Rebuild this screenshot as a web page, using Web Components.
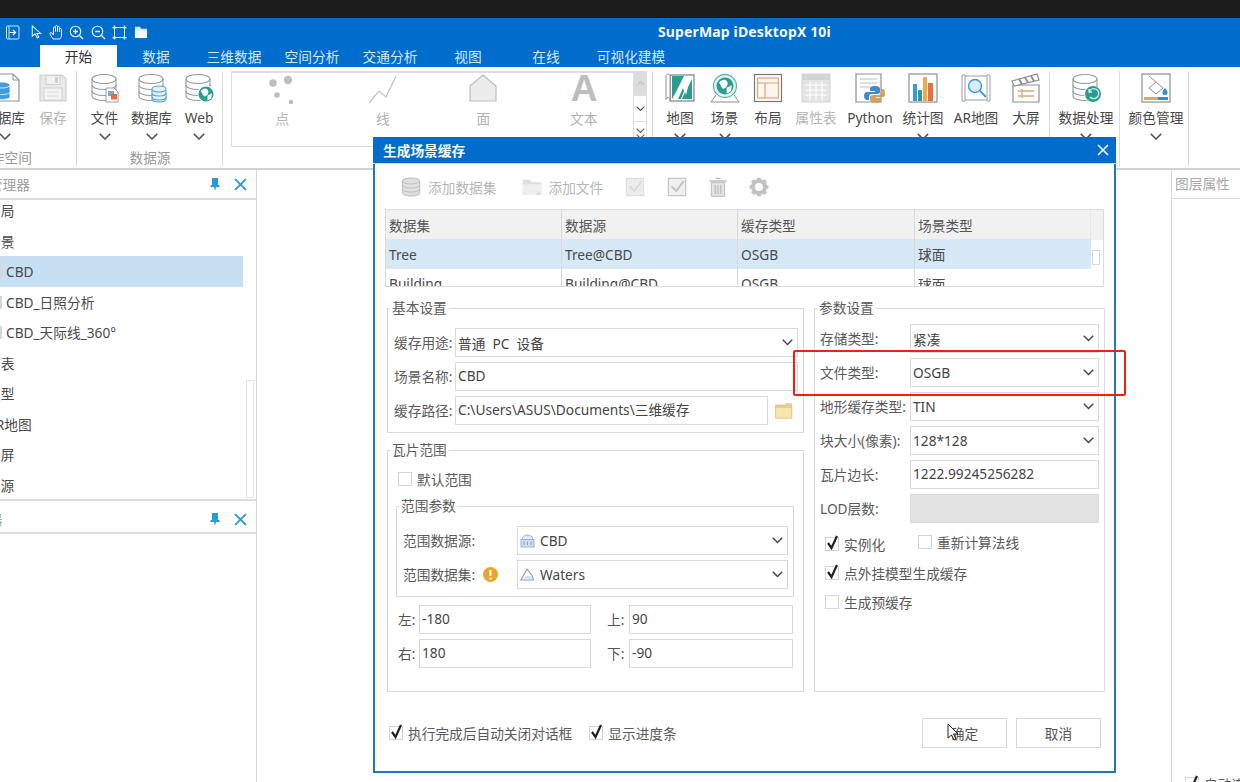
<!DOCTYPE html>
<html lang="zh">
<head>
<meta charset="utf-8">
<title>SuperMap iDesktopX 10i</title>
<style>
html, body { margin: 0; height: 782px; overflow: hidden; background: #fff; }
body { font: 13.7px "Noto Sans", "Noto Sans CJK SC", sans-serif; color: #4a4a4a; }
.coords { display: grid; grid-template-columns: 21px 172px 16px 22px 164px; row-gap: 5px; align-items: center; margin: 3px 0 0 2px; height: 63px; grid-auto-rows: 29px; }
.coords span { color: #555; margin-top: -2px; }
.checks { display: grid; grid-template-columns: 93px 1fr; margin: 8px 0 0 5px; grid-auto-rows: 29px; }
.foot { display: flex; align-items: center; height: 30px; margin-top: 26px; width: 716px; }
</style>
</head>
<body>

<sm-app>
  <sm-quickbar slot="quick"></sm-quickbar>

  <sm-tab slot="tabs" active>开始</sm-tab>
  <sm-tab slot="tabs">数据</sm-tab>
  <sm-tab slot="tabs">三维数据</sm-tab>
  <sm-tab slot="tabs">空间分析</sm-tab>
  <sm-tab slot="tabs">交通分析</sm-tab>
  <sm-tab slot="tabs">视图</sm-tab>
  <sm-tab slot="tabs">在线</sm-tab>
  <sm-tab slot="tabs" style="width:92px">可视化建模</sm-tab>

  <sm-ribbon-group slot="ribbon" caption="工作空间" style="width:145px;margin-left:-68px;--just:flex-end">
    <sm-tool icon="wsdb" label="数据库" style="width:49px"></sm-tool>
    <sm-tool icon="save" label="保存" off nochev style="width:48px"></sm-tool>
  </sm-ribbon-group>
  <sm-ribbon-group slot="ribbon" caption="数据源" style="width:146px;--pad:4px">
    <sm-tool icon="dbfile" label="文件" style="width:47px"></sm-tool>
    <sm-tool icon="dbdb" label="数据库" style="width:47px"></sm-tool>
    <sm-tool icon="dbweb" label="Web" style="width:48px"></sm-tool>
  </sm-ribbon-group>
  <sm-ribbon-group slot="ribbon" style="width:430px;--pad:8px">
    <sm-gallery>
      <sm-tool icon="dots" label="点" off nochev style="width:100.5px"></sm-tool>
      <sm-tool icon="line" label="线" off nochev style="width:100.5px"></sm-tool>
      <sm-tool icon="poly" label="面" off nochev style="width:100.5px"></sm-tool>
      <sm-tool icon="letter" label="文本" off nochev style="width:100.5px"></sm-tool>
    </sm-gallery>
  </sm-ribbon-group>
  <sm-ribbon-group slot="ribbon" style="width:397px;--pad:5px">
    <sm-tool icon="map" label="地图" style="width:44px"></sm-tool>
    <sm-tool icon="scene" label="场景" style="width:45px"></sm-tool>
    <sm-tool icon="layout" label="布局" nochev style="width:42px"></sm-tool>
    <sm-tool icon="attr" label="属性表" off nochev style="width:54px"></sm-tool>
    <sm-tool icon="python" label="Python" nochev style="width:54px"></sm-tool>
    <sm-tool icon="chart" label="统计图" style="width:52px"></sm-tool>
    <sm-tool icon="ar" label="AR地图" nochev style="width:54px"></sm-tool>
    <sm-tool icon="clap" label="大屏" nochev style="width:46px"></sm-tool>
  </sm-ribbon-group>
  <sm-ribbon-group slot="ribbon" style="width:70px">
    <sm-tool icon="proc" label="数据处理" style="width:72px"></sm-tool>
  </sm-ribbon-group>
  <sm-ribbon-group slot="ribbon" style="width:69px">
    <sm-tool icon="color" label="颜色管理" style="width:72px"></sm-tool>
  </sm-ribbon-group>

  <sm-panel slot="left" caption="工作空间管理器" shift="-66" style="height:331px">
    <sm-tree-row shift="-13">布局</sm-tree-row>
    <sm-tree-row shift="-13">场景</sm-tree-row>
    <sm-tree-row shift="6" stub selected>CBD</sm-tree-row>
    <sm-tree-row shift="6" stub>CBD_日照分析</sm-tree-row>
    <sm-tree-row shift="6" stub>CBD_天际线_360°</sm-tree-row>
    <sm-tree-row shift="-13">图表</sm-tree-row>
    <sm-tree-row shift="-13">模型</sm-tree-row>
    <sm-tree-row shift="-13">AR地图</sm-tree-row>
    <sm-tree-row shift="-13">大屏</sm-tree-row>
    <sm-tree-row shift="-27">数据源</sm-tree-row>
  </sm-panel>
  <sm-panel slot="left" caption="图层管理器" shift="-66" style="height:29px;margin-top:4px"></sm-panel>

  <sm-side slot="right" caption="图层属性" foot="自动连接"></sm-side>

  <sm-dialog slot="over" caption="生成场景缓存">
    <sm-dialog-bar></sm-dialog-bar>
    <sm-table></sm-table>

    <sm-columns>
      <div slot="a">
        <sm-group caption="基本设置" style="height:134px;--pad:11px 5px 0 6px;--label:61px">
          <sm-field label="缓存用途:"><sm-combo value="普通&nbsp; PC&nbsp; 设备"></sm-combo></sm-field>
          <sm-field label="场景名称:"><sm-input value="CBD"></sm-input></sm-field>
          <sm-field label="缓存路径:" action="folder"><sm-input value="C:\Users\ASUS\Documents\三维缓存"></sm-input></sm-field>
        </sm-group>
        <sm-group caption="瓦片范围" style="height:251px;margin-top:8px;--pad:12px 9px 0 8px">
          <sm-check label="默认范围" style="margin-left:2px"></sm-check>
          <sm-group caption="范围参数" style="height:100px;margin-top:5px;--pad:11px 5px 0 6px;--label:114px">
            <sm-field label="范围数据源:"><sm-combo icon="dsrc" value="CBD"></sm-combo></sm-field>
            <sm-field label="范围数据集:" warn><sm-combo icon="tri" value="Waters"></sm-combo></sm-field>
          </sm-group>
          <div class="coords">
            <span>左:</span><sm-input value="-180"></sm-input><i></i><span>上:</span><sm-input value="90"></sm-input>
            <span>右:</span><sm-input value="180"></sm-input><i></i><span>下:</span><sm-input value="-90"></sm-input>
          </div>
        </sm-group>
      </div>
      <sm-group slot="b" caption="参数设置" style="height:393px;--pad:7px 5px 0 5px;--label:90px">
        <sm-field label="存储类型:"><sm-combo value="紧凑"></sm-combo></sm-field>
        <sm-field label="文件类型:"><sm-combo value="OSGB"></sm-combo></sm-field>
        <sm-field label="地形缓存类型:"><sm-combo value="TIN"></sm-combo></sm-field>
        <sm-field label="块大小(像素):"><sm-combo value="128*128"></sm-combo></sm-field>
        <sm-field label="瓦片边长:"><sm-input value="1222.99245256282"></sm-input></sm-field>
        <sm-field label="LOD层数:"><sm-input disabled></sm-input></sm-field>
        <div class="checks">
          <sm-check label="实例化" checked></sm-check>
          <sm-check label="重新计算法线" style="margin-top:-2px"></sm-check>
          <sm-check label="点外挂模型生成缓存" checked style="grid-column:1 / 3"></sm-check>
          <sm-check label="生成预缓存" style="grid-column:1 / 3"></sm-check>
        </div>
      </sm-group>
    </sm-columns>

    <div class="foot">
      <sm-check label="执行完成后自动关闭对话框" checked style="margin-left:4px"></sm-check>
      <sm-check label="显示进度条" checked style="margin-left:17px"></sm-check>
      <sm-button style="margin-left:auto">确定</sm-button>
      <sm-button style="margin-left:9px">取消</sm-button>
    </div>
  </sm-dialog>

  <sm-highlight slot="over"></sm-highlight>
  <sm-cursor slot="over"></sm-cursor>
</sm-app>

<script>
const cyl = `<g fill="#fff" stroke="#959aa3" stroke-width="1.100"><path d="M2 6v17c0 2.600 5.400 4.500 12 4.500s12-1.900 12-4.500V6"/><ellipse cx="14" cy="6" rx="12" ry="4.500"/><path fill="none" d="M2 12c0 2.600 5.400 4.500 12 4.500s12-1.900 12-4.500M2 18c0 2.600 5.400 4.500 12 4.500s12-1.900 12-4.500"/></g>`
const globe = (x, y, r) => `<circle cx="${x}" cy="${y}" r="${r}" fill="#2a9d8f"/><path fill="#fff" d="M${x - r * .7} ${y - r * .4}c${r * .4} -${r * .5} ${r * .9} -${r * .4} ${r} 0s-${r * .3} ${r * .8} -${r * .6} ${r * .7}zM${x + r * .2} ${y + r * .2}l${r * .6} -${r * .3}l-${r * .1} ${r * .7}l-${r * .5} ${r * .3}z"/>`
const roll = `<path fill="#fff" stroke="#8b8f98" stroke-width="1" d="M1 3.500c0-3 4-3 4 0v23c0-2.500-4-2.500-4 0z"/>`

// ribbon icons use a 30x30 box, the small toolbar ones are scaled from it
const icons = {
  wsdb: `<path fill="#fff" stroke="#8b8f98" stroke-width="1.200" d="M2 1h21l6 6v21H2z"/><path fill="none" stroke="#8b8f98" d="M23 1v6h6"/><g fill="#3d9be0" stroke="#fff" stroke-width=".8"><path d="M4 18v6c0 1.500 4 2.500 8 2.500s8-1 8-2.500v-6z"/><path d="M4 13v6c0 1.500 4 2.500 8 2.500s8-1 8-2.500v-6z"/><ellipse cx="12" cy="12" rx="8" ry="3"/></g>`,
  save: `<path fill="#e8e8e8" stroke="#d0d0d0" stroke-width="1.200" d="M2 2h22l4 4v22H2z"/><rect x="8" y="2.500" width="14" height="9" fill="#f1f1f1" stroke="#d0d0d0"/><rect x="17" y="4" width="3" height="6" fill="#d0d0d0"/><rect x="6" y="15" width="18" height="12" fill="#f4f4f4" stroke="#d0d0d0"/><path stroke="#d6d6d6" d="M9 19h12M9 23h12"/>`,
  dbfile: `${cyl}<path fill="#fff" stroke="#9a9ea6" d="M16 15h8l4 4v10H16z"/><rect x="18" y="18" width="6" height="5" fill="#6fb2c9"/><rect x="21" y="21" width="6" height="5.500" fill="#f0663a"/>`,
  dbdb: `${cyl}<g fill="#e4f1fa" stroke="#4fa3e0" stroke-width="1.100"><path d="M15 17v9c0 1.800 3 3 7 3s7-1.200 7-3v-9"/><ellipse cx="22" cy="16" rx="7" ry="3"/><path fill="none" d="M15 20c0 1.800 3 3 7 3s7-1.200 7-3M15 24c0 1.800 3 3 7 3s7-1.200 7-3"/></g>`,
  dbweb: `${cyl}<circle cx="22" cy="21" r="8.500" fill="#fff"/>${globe(22, 21, 7.500)}`,
  dots: `<g fill="#bdbdbd"><circle cx="6" cy="9" r="3.800"/><circle cx="21" cy="6" r="4.200"/><circle cx="10" cy="21" r="2.800"/><circle cx="24" cy="28" r="2.300"/></g>`,
  line: `<path fill="none" stroke="#c2c2c2" stroke-width="1.200" d="M1 29L11 17l7 6L28 2"/>`,
  poly: `<path fill="#ececec" stroke="#bdbdbd" stroke-width="1.200" d="M2 12L15 1l13 11v15H2z"/>`,
  letter: `<text x="15" y="27" text-anchor="middle" font-family="Liberation Sans" font-weight="700" font-size="37" fill="#bdbdbd">A</text>`,
  map: `<rect x="5" y="2" width="24" height="26" fill="#fff" stroke="#6f747c" stroke-width="1.100"/><path fill="#2a9d8f" d="M7 3h12L11 19l-4 7zM27 6v20H17l3-7 1 3 2-8z"/><path fill="#2a9d8f" d="M13 26l5-11 1 3-3 8z"/>${roll}`,
  scene: `<path fill="none" stroke="#8b8f98" d="M1 29h28L24 22M6 22l-5 7"/><circle cx="15" cy="13" r="11.500" fill="#e6f4f1" stroke="#5fb8ab" stroke-width="1.300"/>${globe(15, 13, 8.500)}`,
  layout: `<rect x="1.500" y="1.500" width="27" height="27" fill="#fff" stroke="#777" stroke-width="1.200"/><rect x="4.500" y="5" width="21" height="20" fill="#fdf6ee" stroke="#dca672" stroke-width="1.200"/><path fill="none" stroke="#dca672" stroke-width="1.200" d="M4.500 10h21M12 10v15"/>`,
  attr: `<rect x="1" y="1" width="28" height="28" fill="#e4e4e4" stroke="#d4d4d4"/><rect x="1" y="1" width="28" height="6" fill="#d4d4d4"/><path fill="none" stroke="#fff" d="M4 12h22M4 17h22M4 22h22M9 9v18M15 9v18M21 9v18"/>`,
  python: `<path fill="#fff" stroke="#8b8f98" stroke-width="1.200" d="M1 1h25v28H1z"/><path stroke="#b8bcc4" d="M5 6h17M5 10h17M5 14h10"/><path fill="#3b8cc9" d="M20 13c-4 0-5 1-5 3v2h5v1h-8c-2 0-3 2-3 4s1 4 3 4h2v-3c0-2 1-3 3-3h5c2 0 3-1 3-2v-3c0-2-2-3-5-3z"/><path fill="#d8a060" d="M21 30c4 0 5-1 5-3v-2h-5v-1h7c2 0 2-2 2-4s-1-4-2-4h-2v3c0 2-1 3-3 3h-5c-2 0-3 1-3 2v3c0 2 3 3 6 3z"/>`,
  chart: `<rect x="1" y="1" width="28" height="28" fill="#fff" stroke="#8b8f98" stroke-width="1.200"/><rect x="5" y="11" width="4" height="17" fill="#3a9bdc"/><rect x="10" y="17" width="4" height="11" fill="#2a9d8f"/><rect x="15" y="4" width="4" height="24" fill="#f0a94a"/><rect x="20" y="10" width="5" height="18" fill="#e8703a"/>`,
  ar: `<rect x="3" y="3" width="24" height="24" fill="#fff" stroke="#9aa0aa"/><path fill="#fff" stroke="#9aa0aa" d="M1 2h3v26H1zM26 2h3v26h-3z"/><circle cx="14" cy="13" r="6.500" fill="#d8ebf8" stroke="#3d9be0" stroke-width="1.400"/><path stroke="#3d9be0" stroke-width="1.800" d="M19 18l6 6"/>`,
  clap: `<path fill="#fff" stroke="#8b8f98" stroke-width="1.200" d="M2 12h26v17H2z"/><path fill="#fff" stroke="#8b8f98" stroke-width="1.200" d="M1 8L26 1l2 6L3 13z"/><path stroke="#8b8f98" stroke-width="2" d="M8 6l3 5M14 4.500l3 5M20 3l3 5"/><path stroke="#dca672" stroke-width="1.300" d="M7 18h16M7 23h16M11 16v9"/>`,
  proc: `${cyl}<circle cx="22" cy="21" r="8.500" fill="#2a9d8f" stroke="#fff"/><path fill="none" stroke="#d6f0eb" stroke-width="1.300" d="M18 19a5 5 0 1 1 1 5M18 16v3h3"/>`,
  color: `<rect x="1" y="1" width="28" height="28" fill="#fff" stroke="#8b8f98" stroke-width="1.200"/><path fill="#fff" stroke="#8b8f98" d="M15 9l7 6-7 6-7-6zM8 3l7 6"/><path fill="#2f8fd4" d="M24 15c2 2.500 2.500 3.500 2.500 4.500a2.500 2.500 0 0 1-5 0c0-1 .5-2 2.500-4.500z"/><rect x="3" y="24" width="14" height="3" fill="#d9a768"/><rect x="17" y="24" width="10" height="3" fill="#2f8fd4"/>`,
  // small dialog icons
  tdb: `<g fill="#e0e0e0" stroke="#bdbdbd" stroke-width="1.500"><path d="M2 6v18c0 2.500 6 4.500 13 4.500s13-2 13-4.500V6"/><ellipse cx="15" cy="6" rx="13" ry="4.500"/><path fill="none" d="M2 12c0 2.500 6 4.500 13 4.500s13-2 13-4.500M2 18c0 2.500 6 4.500 13 4.500s13-2 13-4.500"/></g>`,
  tfolder: `<path fill="#dedede" d="M1 4h11l3 4h14v19H1z"/><path fill="#eeeeee" d="M1 11h28v16H1z"/><path stroke="#cfcfcf" d="M21 25h7M24.500 21v7"/>`,
  tcheck1: `<rect x="2" y="2" width="26" height="26" fill="#ececec" stroke="#dcdcdc" stroke-width="1.500"/><path fill="none" stroke="#dadada" stroke-width="3" d="M7 14l7 7L25 6"/>`,
  tcheck2: `<rect x="2" y="2" width="26" height="26" fill="#f0f0f0" stroke="#c6c6c6" stroke-width="1.800"/><path fill="none" stroke="#c2c2c2" stroke-width="3" d="M7 14l7 7L25 6"/>`,
  ttrash: `<path fill="#e3e3e3" stroke="#bdbdbd" stroke-width="1.500" d="M5 8h20v21H5z"/><path stroke="#bdbdbd" stroke-width="2" d="M2 6h26M11 2h8M11 12v13M15 12v13M19 12v13"/>`,
  tgear: `<circle cx="15" cy="15" r="9" fill="none" stroke="#c2c2c2" stroke-width="6"/><path stroke="#c2c2c2" stroke-width="5.500" d="M15 1v6M15 23v6M1 15h6M23 15h6M5 5l4 4M21 21l4 4M25 5l-4 4M9 21l-4 4"/>`,
  folder: `<path fill="#e8d28a" stroke="#c9b26a" d="M1 5h27v22H1z"/><path fill="#f5e6ae" d="M2 10h25v16H2z"/><path fill="#ddd2a6" d="M17 2h11v4H17z"/>`,
  dsrc: `<path fill="#e4ecf6" stroke="#7f9fc9" stroke-width="1.500" d="M4 13c0-12 22-12 22 0"/><rect x="2" y="13" width="26" height="15" fill="#cfdff2" stroke="#7f9fc9" stroke-width="1.500"/><path stroke="#7f9fc9" stroke-width="2" d="M8 17v7M15 17v7M22 17v7"/>`,
  tri: `<path fill="#fff" stroke="#7f9fc9" stroke-width="2.200" d="M14 4L2 26h25l-3-9z"/><path fill="#cfdff2" d="M6 23l8-5 10 1 1 5z"/>`,
  // quick bar, white strokes
  qenter: `<g fill="none" stroke="#cfe5f8" stroke-width="2"><rect x="3" y="2" width="25" height="26" rx="2"/><path d="M8 2v26"/></g><path fill="none" stroke="#fff" stroke-width="2.200" d="M9 15h12M16 10l5 5-5 5"/>`,
  qarrow: `<path fill="none" stroke="#e4f0fb" stroke-width="2.200" d="M7 2v22l6-5 5 9 3-2-4-8h8z"/>`,
  qhand: `<path fill="none" stroke="#e4f0fb" stroke-width="2" d="M8 28l-6-10c-1-3 2-4 4-2l3 4V6c0-3 4-3 4 0v7V3c0-3 4-3 4 0v10V5c0-3 4-3 4 0v9-5c0-3 4-3 4 0v11c0 4-2 6-3 8z"/>`,
  qplus: `<circle cx="13" cy="13" r="10.500" fill="none" stroke="#e4f0fb" stroke-width="2.400"/><path stroke="#e4f0fb" stroke-width="2.800" d="M21 21l7 7M8 13h10M13 8v10"/>`,
  qminus: `<circle cx="13" cy="13" r="10.500" fill="none" stroke="#e4f0fb" stroke-width="2.400"/><path stroke="#e4f0fb" stroke-width="2.800" d="M21 21l7 7M8 13h10"/>`,
  qfull: `<rect x="5" y="5" width="20" height="20" fill="none" stroke="#e4f0fb" stroke-width="2"/><path stroke="#e4f0fb" stroke-width="2.500" d="M1 5h8M5 1v8M21 5h8M25 1v8M1 25h8M5 21v8M21 25h8M25 21v8"/>`,
  qfolder: `<path fill="#cfe5f8" d="M2 4h11l2 4h13v5H2z"/><path fill="#f4f9fe" d="M2 12h26v16H2z"/>`
}

class SmIcon extends HTMLElement {
  constructor() {
    super()
    this.attachShadow({ mode: 'open' })
  }
  connectedCallback() {
    const size = this.getAttribute('size') || 30
    this.shadowRoot.innerHTML = `
      <style>:host{display:block;width:${size}px;height:${size}px;flex:none} svg{display:block;overflow:visible}</style>
      <svg width="${size}" height="${size}" viewBox="0 0 30 30">${icons[this.getAttribute('name')] || ''}</svg>`
  }
}
customElements.define('sm-icon', SmIcon)

const chevron = (color, w) => `<svg width="${w}" height="${w * .6}" viewBox="0 0 10 6"><path fill="none" stroke="${color}" stroke-width="1.300" d="M.7.7L5 5l4.300-4.300"/></svg>`

class SmApp extends HTMLElement {
  constructor() {
    super()
    this.attachShadow({ mode: 'open' }).innerHTML = `
      <style>
        :host { display: block; position: relative; width: 1240px; height: 782px; overflow: hidden; }
        .black { height: 18px; background: #1c1c1c; }
        .title { height: 27px; background: #006dcc; display: flex; align-items: center; color: #f3f8fd; font-weight: 700; font-size: 14px; letter-spacing: .14px; }
        .title h1 { font: inherit; margin: 0 0 0 511px; white-space: nowrap; }
        .tabs { height: 22px; padding-left: 39px; display: flex; background: #006dcc; }
        .ribbon { margin-top: 1px; display: flex; border-bottom: 2px solid #d2d2d2; height: 100px; }
        .main { display: flex; height: 612px; }
        .left { width: 257px; flex: none; border-right: 1px solid #d8d8d8; box-sizing: border-box; }
        .mid { flex: 1; }
        .right { width: 69px; flex: none; }
      </style>
      <div class="black"></div>
      <div class="title"><slot name="quick"></slot><h1>SuperMap iDesktopX 10i</h1></div>
      <div class="tabs"><slot name="tabs"></slot></div>
      <div class="ribbon"><slot name="ribbon"></slot></div>
      <div class="main">
        <div class="left"><slot name="left"></slot></div>
        <div class="mid"></div>
        <div class="right"><slot name="right"></slot></div>
      </div>
      <slot name="over"></slot>`
  }
}
customElements.define('sm-app', SmApp)

class SmQuickbar extends HTMLElement {
  constructor() {
    super()
    const items = [['qenter', 5, 15], ['qarrow', 9, 14], ['qhand', 6, 15], ['qplus', 5, 15], ['qminus', 7, 15], ['qfull', 6, 15], ['qfolder', 7, 14]]
    this.attachShadow({ mode: 'open' }).innerHTML = `
      <style>:host{display:flex;align-items:center;width:147px;flex:none} sm-icon{margin-top:1px}</style>
      ${items.map(i => `<sm-icon name="${i[0]}" size="${i[2]}" style="margin-left:${i[1]}px"></sm-icon>`).join('')}`
  }
}
customElements.define('sm-quickbar', SmQuickbar)

class SmTab extends HTMLElement {
  constructor() {
    super()
    this.attachShadow({ mode: 'open' }).innerHTML = `
      <style>
        :host { display: flex; align-items: center; justify-content: center; width: 78px; height: 23px; padding-bottom: 1px; box-sizing: border-box; color: #d6e8f8; flex: none; }
        :host([active]) { background: #fff; color: #333; margin-left: 1px; width: 77px; }
      </style><slot></slot>`
  }
}
customElements.define('sm-tab', SmTab)

class SmRibbonGroup extends HTMLElement {
  constructor() {
    super()
    this.attachShadow({ mode: 'open' })
  }
  connectedCallback() {
    this.shadowRoot.innerHTML = `
      <style>
        :host { display: flex; flex-direction: column; flex: none; position: relative; height: 100px; box-sizing: border-box; }
        .tools { display: flex; height: 80px; padding-left: var(--pad, 0); justify-content: var(--just, flex-start); }
        .cap { height: 19px; line-height: 19px; text-align: center; color: #999; white-space: nowrap; }
        .sep { position: absolute; right: 0; top: 3px; bottom: 2px; width: 1px; background: #dcdcdc; }
      </style>
      <div class="tools"><slot></slot></div>
      <div class="cap">${this.getAttribute('caption') || ''}</div>
      <div class="sep"></div>`
  }
}
customElements.define('sm-ribbon-group', SmRibbonGroup)

class SmTool extends HTMLElement {
  constructor() {
    super()
    this.attachShadow({ mode: 'open' })
  }
  connectedCallback() {
    const off = this.hasAttribute('off')
    this.shadowRoot.innerHTML = `
      <style>
        :host { display: flex; flex-direction: column; align-items: center; flex: none; padding-top: 5px; box-sizing: border-box; }
        .label { height: 18px; line-height: 18px; margin-top: 6px; white-space: nowrap; color: ${off ? '#b4b4b4' : '#484848'}; }
        svg { margin-top: 6px; }
      </style>
      <sm-icon name="${this.getAttribute('icon')}"></sm-icon>
      <div class="label">${this.getAttribute('label')}</div>
      ${this.hasAttribute('nochev') ? '' : chevron('#555', 12)}`
  }
}
customElements.define('sm-tool', SmTool)

class SmGallery extends HTMLElement {
  constructor() {
    super()
    this.attachShadow({ mode: 'open' }).innerHTML = `
      <style>
        :host { display: flex; width: 416px; height: 76px; margin-top: 3px; }
        .items { display: flex; width: 403px; height: 76px; border: 1px solid #dfdfdf; border-top-width: 2px; box-sizing: border-box; }
        .items ::slotted(*) { margin-top: -4px; }
        .scroll { width: 13px; display: flex; flex-direction: column; border-right: 1px solid #dfdfdf; box-sizing: border-box; }
        .scroll div { flex: 1; display: flex; align-items: center; justify-content: center; border-bottom: 1px solid #dfdfdf; flex-direction: column; gap: 1px; }
        .scroll .up { background: #dcdcdc; }
      </style>
      <div class="items"><slot></slot></div>
      <div class="scroll">
        <div class="up"><svg width="9" height="5" viewBox="0 0 10 6"><path fill="none" stroke="#c4c4c4" stroke-width="1.300" d="M.7 5.300L5 1l4.300 4.300"/></svg></div>
        <div>${chevron('#555', 9)}</div>
        <div>${chevron('#666', 9)}${chevron('#666', 9)}</div>
      </div>`
  }
}
customElements.define('sm-gallery', SmGallery)

const pin = `<svg width="12" height="14" viewBox="0 0 12 14"><path fill="#2a9ad8" d="M3 1h6v7h1.500v2H7l-1 4-1-4H1.500V8H3z"/></svg>`
const cross = (c, s) => `<svg width="${s}" height="${s}" viewBox="0 0 12 12"><path stroke="${c}" stroke-width="1.700" d="M1 1l10 10M11 1L1 11"/></svg>`

class SmPanel extends HTMLElement {
  constructor() {
    super()
    this.attachShadow({ mode: 'open' })
  }
  connectedCallback() {
    this.shadowRoot.innerHTML = `
      <style>
        :host { display: block; overflow: hidden; box-sizing: border-box; border-bottom: 2px solid #dcdcdc; position: relative; }
        .head { height: 28px; display: flex; align-items: center; border-bottom: 2px solid #dcdcdc; color: #a2a2a2; }
        .cap { margin-left: ${this.getAttribute('shift')}px; white-space: nowrap; flex: 1; }
        .head svg:first-of-type { margin-right: 13px; }
        .head svg:last-of-type { margin-right: 9px; }
        .tree { margin-top: -5px; }
        .thumb { position: absolute; left: 246px; top: 210px; width: 8px; height: 118px; border: 1px solid #e6e6e6; box-sizing: border-box; }
      </style>
      <div class="head"><div class="cap">${this.getAttribute('caption')}</div>${pin}${cross('#2a9ad8', 13)}</div>
      <div class="tree"><slot></slot></div>
      ${this.children.length ? '<div class="thumb"></div>' : ''}`
  }
}
customElements.define('sm-panel', SmPanel)

class SmTreeRow extends HTMLElement {
  constructor() {
    super()
    this.attachShadow({ mode: 'open' })
  }
  connectedCallback() {
    this.shadowRoot.innerHTML = `
      <style>
        :host { display: flex; align-items: center; height: 30.5px; width: 243px; box-sizing: border-box; color: #4a4a4a; white-space: nowrap; position: relative; }
        :host([selected]) { background: #c6dff3; }
        span { margin-left: ${this.getAttribute('shift')}px; }
        i { position: absolute; left: 0; top: 9px; width: 2px; height: 13px; background: #d6d6d6; }
      </style>
      ${this.hasAttribute('stub') ? '<i></i>' : ''}<span><slot></slot></span>`
  }
}
customElements.define('sm-tree-row', SmTreeRow)

class SmSide extends HTMLElement {
  constructor() {
    super()
    this.attachShadow({ mode: 'open' })
  }
  connectedCallback() {
    this.shadowRoot.innerHTML = `
      <style>
        :host { display: block; height: 612px; border-left: 1px solid #dcdcdc; box-sizing: border-box; }
        .head { height: 28px; line-height: 28px; padding-left: 3px; color: #a8a8a8; border-bottom: 1px solid #dcdcdc; }
        .foot { margin: 577px 0 0 13px; display: flex; gap: 6px; white-space: nowrap; }
      </style>
      <div class="head">${this.getAttribute('caption')}</div>
      <div class="foot"><sm-check label="${this.getAttribute('foot')}" checked></sm-check></div>`
  }
}
customElements.define('sm-side', SmSide)

class SmDialog extends HTMLElement {
  constructor() {
    super()
    this.attachShadow({ mode: 'open' })
  }
  connectedCallback() {
    this.shadowRoot.innerHTML = `
      <style>
        :host { position: absolute; left: 373px; top: 137px; width: 743px; height: 636px; box-sizing: border-box; background: #fff; border: 2px solid #1a78c4; border-top: 0; }
        .bar { height: 26px; margin: 0 -2px; background: #006dcc; color: #f5f9fd; font-weight: 700; display: flex; align-items: center; justify-content: space-between; padding: 0 7px 0 10px; border-bottom: 1px solid #bfe3f5; }
        .body { padding: 0 9px 0 10px; }
      </style>
      <div class="bar"><span>${this.getAttribute('caption')}</span>${cross('#f5f9fd', 12)}</div>
      <div class="body"><slot></slot></div>`
  }
}
customElements.define('sm-dialog', SmDialog)

class SmDialogBar extends HTMLElement {
  constructor() {
    super()
    this.attachShadow({ mode: 'open' }).innerHTML = `
      <style>
        :host { display: flex; align-items: center; height: 45px; color: #b6b6b6; white-space: nowrap; }
        sm-icon { margin-right: 7px; }
      </style>
      <sm-icon name="tdb" size="20" style="margin-left:16px"></sm-icon><span>添加数据集</span>
      <sm-icon name="tfolder" size="20" style="margin-left:26px;margin-right:6px"></sm-icon><span>添加文件</span>
      <sm-icon name="tcheck1" size="20" style="margin-left:22px;margin-right:0"></sm-icon>
      <sm-icon name="tcheck2" size="20" style="margin-left:22px;margin-right:0"></sm-icon>
      <sm-icon name="ttrash" size="20" style="margin-left:21px;margin-right:0"></sm-icon>
      <sm-icon name="tgear" size="20" style="margin-left:21px;margin-right:0"></sm-icon>`
  }
}
customElements.define('sm-dialog-bar', SmDialogBar)

class SmTable extends HTMLElement {
  constructor() {
    super()
    const cols = ['数据集', '数据源', '缓存类型', '场景类型']
    const rows = [['Tree', 'Tree@CBD', 'OSGB', '球面'], ['Building', 'Building@CBD', 'OSGB', '球面']]
    const cells = (r, tag) => r.map(t => `<div class="${tag}">${t}</div>`).join('')
    this.attachShadow({ mode: 'open' }).innerHTML = `
      <style>
        :host { display: block; position: relative; width: 719px; height: 78px; border: 1px solid #dcdcdc; box-sizing: border-box; overflow: hidden; }
        .grid { display: grid; grid-template-columns: 176px 176px 177px 176px; grid-template-rows: 30px 29px 29px; }
        .grid div { display: flex; align-items: center; padding-left: 3px; border-right: 1px solid #d8d8d8; box-sizing: border-box; white-space: nowrap; color: #4a4a4a; }
        .grid div:nth-child(4n) { border-right: 0; }
        .h { background: #f1f1f1; border-bottom: 1px solid #dfe5ea; color: #555 !important; }
        .s { background: #d6e7f6; border-bottom: 1px solid #dce7f0; }
        .filler { position: absolute; right: 0; top: 0; width: 13px; height: 30px; background: #f1f1f1; border-left: 1px solid #e6e6e6; box-sizing: border-box; }
        .thumb { position: absolute; right: 3px; top: 40px; width: 8px; height: 15px; border: 1px solid #d8d8d8; box-sizing: border-box; }
      </style>
      <div class="grid">${cells(cols, 'h')}${cells(rows[0], 's')}${cells(rows[1], 'n')}</div>
      <div class="filler"></div><div class="thumb"></div>`
  }
}
customElements.define('sm-table', SmTable)

class SmColumns extends HTMLElement {
  constructor() {
    super()
    this.attachShadow({ mode: 'open' }).innerHTML = `
      <style>:host{display:grid;grid-template-columns:417px 291px;column-gap:10px;margin:12px 0 0 2px}</style>
      <slot name="a"></slot><slot name="b"></slot>`
  }
}
customElements.define('sm-columns', SmColumns)

class SmGroup extends HTMLElement {
  constructor() {
    super()
    this.attachShadow({ mode: 'open' })
  }
  connectedCallback() {
    this.shadowRoot.innerHTML = `
      <style>
        :host { display: block; box-sizing: border-box; }
        fieldset { margin: 0; padding: 0; height: 100%; box-sizing: border-box; border: 1px solid #dadada; min-inline-size: 0; }
        legend { margin-left: 2px; padding: 0 2px; height: 18px; line-height: 18px; color: #5c5c5c; }
        .body { display: flex; flex-direction: column; gap: 5px; padding: var(--pad, 0); }
      </style>
      <fieldset><legend>${this.getAttribute('caption')}</legend><div class="body"><slot></slot></div></fieldset>`
  }
}
customElements.define('sm-group', SmGroup)

class SmField extends HTMLElement {
  constructor() {
    super()
    this.attachShadow({ mode: 'open' })
  }
  connectedCallback() {
    const warn = this.hasAttribute('warn') ? `<svg class="warn" width="15" height="15" viewBox="0 0 15 15"><circle cx="7.500" cy="7.500" r="7.500" fill="#e8a62e"/><path stroke="#fff" stroke-width="2" d="M7.500 3v6M7.500 10.500v2"/></svg>` : ''
    const action = this.getAttribute('action')
    this.shadowRoot.innerHTML = `
      <style>
        :host { display: flex; align-items: center; height: 29px; }
        .label { width: var(--label, 61px); flex: none; white-space: nowrap; color: #5a5a5a; position: relative; margin-top: -2px; }
        .warn { position: absolute; left: 80px; top: 3px; }
        .ctl { flex: 1; min-width: 0; }
        sm-icon { margin: 0 5px 0 7px; }
      </style>
      <div class="label">${this.getAttribute('label')}${warn}</div>
      <div class="ctl"><slot></slot></div>
      ${action ? `<sm-icon name="${action}" size="18"></sm-icon>` : ''}`
  }
}
customElements.define('sm-field', SmField)

class SmInput extends HTMLElement {
  constructor() {
    super()
    this.attachShadow({ mode: 'open' })
  }
  connectedCallback() {
    this.shadowRoot.innerHTML = `
      <style>
        :host { display: block; height: 29px; box-sizing: border-box; border: 1px solid #dadada; line-height: 26px; padding-left: 2px; color: #454545; white-space: nowrap; overflow: hidden; background: #fff; }
        :host([disabled]) { background: #e3e3e3; }
      </style>${this.getAttribute('value') || ''}`
  }
}
customElements.define('sm-input', SmInput)

class SmCombo extends HTMLElement {
  constructor() {
    super()
    this.attachShadow({ mode: 'open' })
  }
  connectedCallback() {
    const icon = this.getAttribute('icon')
    this.shadowRoot.innerHTML = `
      <style>
        :host { display: flex; align-items: center; height: 29px; box-sizing: border-box; border: 1px solid #dadada; padding: 0 4px 0 2px; color: #454545; white-space: nowrap; background: #fff; }
        span { flex: 1; }
        sm-icon { margin: 0 5px 0 0; }
      </style>
      ${icon ? `<sm-icon name="${icon}" size="15"></sm-icon>` : ''}<span>${this.getAttribute('value')}</span>${chevron('#444', 11)}`
  }
}
customElements.define('sm-combo', SmCombo)

class SmCheck extends HTMLElement {
  constructor() {
    super()
    this.attachShadow({ mode: 'open' })
  }
  connectedCallback() {
    const mark = this.hasAttribute('checked') ? `<svg width="15" height="17" viewBox="0 0 15 17"><path fill="none" stroke="#222" stroke-width="2.200" d="M3 9l3.500 5L12 2"/></svg>` : ''
    this.shadowRoot.innerHTML = `
      <style>
        :host { display: flex; align-items: center; gap: 5px; height: 16px; white-space: nowrap; color: #5a5a5a; }
        .box { width: 14px; height: 14px; border: 1px solid #d4d4d4; box-sizing: border-box; position: relative; flex: none; }
        svg { position: absolute; left: -1px; top: -4px; }
      </style>
      <div class="box">${mark}</div><span>${this.getAttribute('label')}</span>`
  }
}
customElements.define('sm-check', SmCheck)

class SmButton extends HTMLElement {
  constructor() {
    super()
    this.attachShadow({ mode: 'open' }).innerHTML = `
      <style>:host{display:flex;align-items:center;justify-content:center;width:85px;height:30px;box-sizing:border-box;border:1px solid #d8d8d8;color:#555;background:#fff;flex:none}</style>
      <slot></slot>`
  }
}
customElements.define('sm-button', SmButton)

class SmHighlight extends HTMLElement {
  constructor() {
    super()
    this.attachShadow({ mode: 'open' }).innerHTML = `
      <style>:host{position:absolute;left:793px;top:350px;width:333px;height:46px;box-sizing:border-box;border:2.500px solid #f0220f;border-radius:2px;pointer-events:none}</style>`
  }
}
customElements.define('sm-highlight', SmHighlight)

class SmCursor extends HTMLElement {
  constructor() {
    super()
    this.attachShadow({ mode: 'open' }).innerHTML = `
      <style>:host{position:absolute;left:947px;top:723px;width:12px;height:18px} svg{display:block}</style>
      <svg width="12" height="18" viewBox="0 0 12 18"><path fill="#fff" stroke="#222" d="M1 1v14l3.500-3 2.500 5 2-1-2.500-5H11z"/></svg>`
  }
}
customElements.define('sm-cursor', SmCursor)
</script>
</body>
</html>
